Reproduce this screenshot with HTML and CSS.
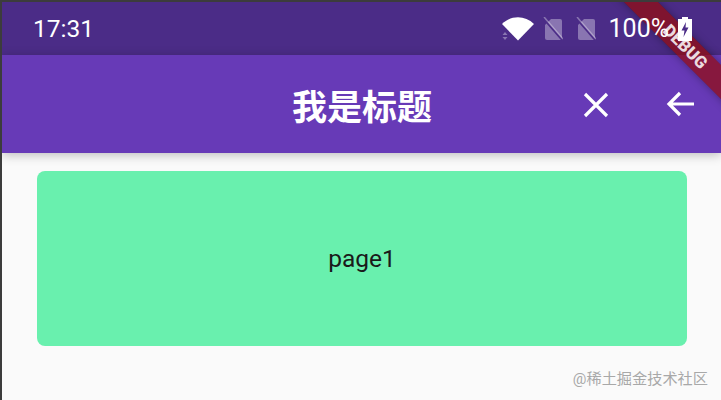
FILE: index.html
```html
<!DOCTYPE html>
<html lang="zh">
<head>
  <meta charset="UTF-8">
  <title>page1</title>
  <link rel="stylesheet" href="styles.css">
</head>
<body>
  <div class="screen">
    <div class="status-bar">
      <span class="clock">17:31</span>
      <div class="status-icons">
        <svg class="wifi" width="32" height="24" viewBox="0 0 32 24">
          <path class="white" d="M0 7 C9 -2 23 -2 32 7 L16 23.500 Z"/>
          <path class="dim" d="M0.500 18 L3 15 L5.500 18 Z M0.500 20 L5.500 20 L3 23 Z"/>
        </svg>
        <svg class="sim" width="20" height="24" viewBox="0 0 20 24">
          <path class="dim" d="M8 2 L17 2 Q19 2 19 4 L19 22 Q19 23 18 23 L4 23 Q2 23 2 21 L2 8 Z"/>
          <path class="slash-gap" d="M0 1 L20 24"/>
          <path class="slash" d="M1 0 L20 22"/>
        </svg>
        <svg class="sim" width="20" height="24" viewBox="0 0 20 24">
          <path class="dim" d="M8 2 L17 2 Q19 2 19 4 L19 22 Q19 23 18 23 L4 23 Q2 23 2 21 L2 8 Z"/>
          <path class="slash-gap" d="M0 1 L20 24"/>
          <path class="slash" d="M1 0 L20 22"/>
        </svg>
        <span class="battery-text">100%</span>
        <svg class="battery" width="14" height="24" viewBox="0 0 14 24">
          <path class="white" d="M4 0 L10 0 L10 2 L14 2 L14 24 L0 24 L0 2 L4 2 Z"/>
          <path class="bolt" d="M8 5 L3.500 13.500 L6.500 13.500 L5.500 20 L10.500 10.500 L7.500 10.500 Z"/>
        </svg>
      </div>
    </div>
    <header class="app-bar">
      <h1 class="title">我是标题</h1>
      <div class="actions">
        <svg class="close-icon" width="28" height="28" viewBox="0 0 28 28">
          <path d="M3 3 L25 25 M25 3 L3 25"/>
        </svg>
        <svg class="back-icon" width="32" height="28" viewBox="0 0 32 28">
          <path d="M32 14 L8 14 M18 3 L7 14 L18 25"/>
        </svg>
      </div>
    </header>
    <main class="content">
      <div class="card">page1</div>
    </main>
    <div class="debug-banner">DEBUG</div>
    <span class="watermark">@稀土掘金技术社区</span>
  </div>
</body>
</html>
```
FILE: styles.css
```css
* {
  margin: 0;
  padding: 0;
  box-sizing: border-box;
}

html, body {
  width: 721px;
  height: 400px;
  overflow: hidden;
}

body {
  background-color: #3c3c3c;
  font-family: Roboto, "Noto Sans CJK SC", sans-serif;
}

.screen {
  position: relative;
  display: flex;
  flex-direction: column;
  width: 719px;
  height: 398px;
  margin: 2px 0 0 2px;
  overflow: hidden;
  background-color: #fafafa;
}

/* Status bar */
.status-bar {
  display: flex;
  justify-content: space-between;
  align-items: center;
  height: 53px;
  padding: 0 29px 0 31px;
  background-color: #4b2c87;
  color: #fff;
}

.clock {
  font-size: 24.500px;
}

/* the system icons sit above the debug ribbon */
.status-icons {
  position: relative;
  z-index: 3;
  display: flex;
  align-items: center;
}

.status-icons svg {
  display: block;
  flex-shrink: 0;
}

.white {
  fill: #fff;
}

.dim {
  fill: #fff;
  opacity: 0.35;
}

.slash-gap {
  stroke: #4b2c87;
  stroke-width: 2;
  fill: none;
}

.slash {
  stroke: #fff;
  stroke-opacity: 0.35;
  stroke-width: 1.500;
  fill: none;
}

.bolt {
  fill: #4b2c87;
}

.wifi {
  margin-right: 9px;
}

.sim {
  margin-right: 13px;
}

.battery-text {
  margin-right: 9px;
  font-size: 25px;
  white-space: nowrap;
}

/* App bar */
.app-bar {
  position: relative;
  z-index: 1;
  display: flex;
  justify-content: flex-end;
  align-items: center;
  height: 98px;
  background-color: #673ab7;
  box-shadow: 0 2px 10px rgba(0, 0, 0, 0.25);
}

.title {
  position: absolute;
  left: 290px;
  color: #fff;
  font-size: 35px;
  font-weight: 700;
}

.actions {
  display: flex;
  align-items: center;
  gap: 52px;
  padding-right: 27px;
}

.actions svg {
  display: block;
  fill: none;
  stroke: #fff;
  stroke-width: 3.200;
}

.close-icon {
  margin-top: 2px;
}

/* Content */
.content {
  padding: 18px 34px 0 35px;
}

.card {
  display: flex;
  justify-content: center;
  align-items: center;
  height: 175px;
  border-radius: 8px;
  background-color: #69f0ae;
  color: #1a1a1a;
  font-size: 24.500px;
}

/* Debug ribbon */
.debug-banner {
  position: absolute;
  top: 31px;
  right: -48px;
  z-index: 2;
  width: 170px;
  height: 24px;
  padding-left: 4px;
  background-color: rgba(150, 10, 10, 0.7);
  box-shadow: 0 0 8px rgba(0, 0, 0, 0.35);
  color: rgba(255, 255, 255, 0.85);
  font-size: 17px;
  font-weight: 900;
  line-height: 24px;
  text-align: center;
  transform: rotate(45deg);
}

.watermark {
  position: absolute;
  right: 13px;
  bottom: 12px;
  color: #a8a8a8;
  font-size: 15.200px;
}
```
